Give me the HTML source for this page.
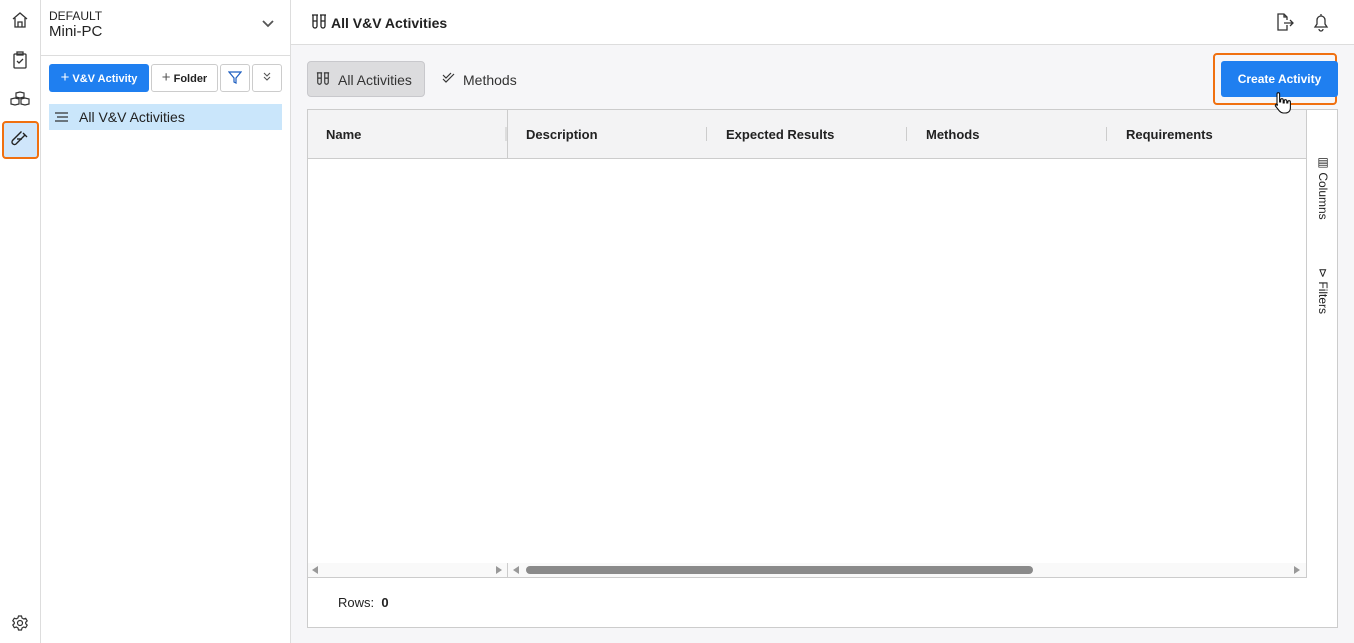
<!DOCTYPE html>
<html><head><meta charset="utf-8"><style>
*{box-sizing:border-box;margin:0;padding:0}
body{width:1354px;height:643px;overflow:hidden;font-family:"Liberation Sans",sans-serif;background:#f6f6f8;position:relative;color:#222}
.abs{position:absolute}
svg{display:block}
</style></head><body>
<div class="abs" style="left:0;top:0;width:41px;height:643px;background:#fff;border-right:1px solid #ddd"></div>
<svg class="abs" style="left:10px;top:10px" width="20" height="20" viewBox="0 0 20 20" fill="none" stroke="#333" stroke-width="1.3"><path d="M3 9L10 3l7 6M5 8v9h10V8M8 17v-5h4v5"/></svg>
<svg class="abs" style="left:11px;top:50px" width="18" height="20" viewBox="0 0 18 20" fill="none" stroke="#333" stroke-width="1.3"><rect x="3" y="4" width="12" height="14" rx="1"/><rect x="6" y="2" width="6" height="3"/><path d="M6 11l2 2 4-4"/></svg>
<svg class="abs" style="left:9px;top:90px" width="22" height="20" viewBox="0 0 22 20" fill="none" stroke="#333" stroke-width="1.2"><path d="M7 3l4-1 4 1v4l-4 1-4-1z M2 9l4-1 4 1v5l-4 1-4-1z M12 9l4-1 4 1v5l-4 1-4-1z"/></svg>
<div class="abs" style="left:2px;top:121px;width:37px;height:38px;border:2.5px solid #f07010;border-radius:4px;background:#cfe6fb"></div>
<svg class="abs" style="left:10px;top:130px" width="20" height="20" viewBox="0 0 20 20" fill="none" stroke="#222" stroke-width="1.4"><path d="M13 3l4 4M15 5L6 14a2.5 2.5 0 0 1-3.5-3.5L11.5 1.5" /><path d="M7 9h5"/></svg>
<svg class="abs" style="left:11px;top:614px" width="18" height="18" viewBox="0 0 18 18" fill="none" stroke="#333" stroke-width="1.2"><circle cx="9" cy="9" r="2.5"/><path d="M7.5 2h3l.5 2 1.7 1 2-.7 1.5 2.6-1.5 1.4v1.4l1.5 1.4-1.5 2.6-2-.7-1.7 1-.5 2h-3l-.5-2-1.7-1-2 .7L1.8 11l1.5-1.4V8.2L1.8 6.8l1.5-2.6 2 .7 1.7-1z"/></svg>
<div class="abs" style="left:41px;top:0;width:250px;height:643px;background:#fff;border-right:1px solid #ddd"></div>
<div class="abs" style="left:41px;top:55px;width:249px;height:1px;background:#ddd"></div>
<div class="abs" style="left:49px;top:9px;font-size:12px;color:#222">DEFAULT</div>
<div class="abs" style="left:49px;top:23px;font-size:15px;color:#222">Mini-PC</div>
<svg class="abs" style="left:261px;top:19px" width="14" height="10" viewBox="0 0 14 10" fill="none" stroke="#555" stroke-width="1.8"><path d="M2 2l5 5 5-5"/></svg>
<div class="abs" style="left:49px;top:64px;width:100px;height:28px;background:#1f7ff0;border-radius:3px;color:#fff;font-size:11px;font-weight:bold;line-height:28px;text-align:center"><span style="font-weight:normal;font-size:15px">+</span> V&amp;V Activity</div>
<div class="abs" style="left:151px;top:64px;width:67px;height:28px;border:1px solid #ccc;border-radius:3px;font-size:11px;font-weight:bold;line-height:26px;text-align:center"><span style="font-weight:normal;font-size:15px;color:#555">+</span> Folder</div>
<div class="abs" style="left:220px;top:64px;width:30px;height:28px;border:1px solid #ccc;border-radius:3px"></div>
<svg class="abs" style="left:228px;top:71px" width="14" height="13" viewBox="0 0 14 13" fill="none" stroke="#1f5fc0" stroke-width="1.2"><path d="M1 1h12L8 7v5L6 11V7z"/></svg>
<div class="abs" style="left:252px;top:64px;width:30px;height:28px;border:1px solid #ccc;border-radius:3px"></div>
<svg class="abs" style="left:262px;top:71px" width="10" height="12" viewBox="0 0 10 12" fill="none" stroke="#555" stroke-width="1.1"><path d="M2 2l3 3 3-3M2 6l3 3 3-3"/></svg>
<div class="abs" style="left:49px;top:104px;width:233px;height:26px;background:#cae6fb"></div>
<svg class="abs" style="left:54px;top:110px" width="16" height="14" viewBox="0 0 16 14" stroke="#333" stroke-width="1.2"><path d="M1 3h13M3 7h11M1 11h13"/></svg>
<div class="abs" style="left:79px;top:109px;font-size:14px;color:#222">All V&amp;V Activities</div>
<div class="abs" style="left:291px;top:0;width:1063px;height:45px;background:#fff;border-bottom:1px solid #ddd"></div>
<svg class="abs" style="left:311px;top:14px" width="16" height="16" viewBox="0 0 16 16" fill="none" stroke="#222" stroke-width="1.3"><path d="M2 1v11a2 2 0 0 0 4 0V1M10 1v11a2 2 0 0 0 4 0V1M1 1h6M9 1h6M2 7h4M10 7h4" /></svg>
<div class="abs" style="left:331px;top:15px;font-size:14px;font-weight:bold">All V&amp;V Activities</div>
<svg class="abs" style="left:1275px;top:12px" width="20" height="20" viewBox="0 0 20 20" fill="none" stroke="#333" stroke-width="1.3"><path d="M12 13v5H3V2h6l3 3v3M9 2v3h3M9 11h9M15 8l3 3-3 3"/></svg>
<svg class="abs" style="left:1312px;top:12px" width="18" height="20" viewBox="0 0 18 20" fill="none" stroke="#333" stroke-width="1.3"><path d="M3 15h12l-2-3V8a4 4 0 0 0-8 0v4zM7 17a2 2 0 0 0 4 0M9 2v2"/></svg>
<div class="abs" style="left:307px;top:61px;width:118px;height:36px;background:#dcdcde;border:1px solid #c8c8cc;border-radius:4px"></div>
<svg class="abs" style="left:316px;top:72px" width="14" height="14" viewBox="0 0 16 16" fill="none" stroke="#333" stroke-width="1.3"><path d="M2 1v11a2 2 0 0 0 4 0V1M10 1v11a2 2 0 0 0 4 0V1M1 1h6M9 1h6M2 7h4M10 7h4" /></svg>
<div class="abs" style="left:338px;top:72px;font-size:14px;color:#333">All Activities</div>
<svg class="abs" style="left:442px;top:72px" width="14" height="12" viewBox="0 0 14 12" fill="none" stroke="#333" stroke-width="1.2"><path d="M1 3l3 3 5-5M1 7l3 3 8-8"/></svg>
<div class="abs" style="left:463px;top:72px;font-size:14px;color:#333">Methods</div>
<div class="abs" style="left:1213px;top:53px;width:124px;height:52px;border:2.5px solid #f07010;border-radius:4px"></div>
<div class="abs" style="left:1221px;top:61px;width:117px;height:36px;background:#1f7ff0;border-radius:3px;color:#fff;font-size:12px;font-weight:bold;line-height:36px;text-align:center">Create Activity</div>
<div class="abs" style="left:307px;top:109px;width:1031px;height:519px;background:#fff;border:1px solid #ccc"></div>
<div class="abs" style="left:308px;top:110px;width:999px;height:49px;background:#f3f3f4;border-bottom:1px solid #ccc"></div>
<div class="abs" style="left:507px;top:110px;width:1px;height:49px;background:#ccc"></div>
<div class="abs" style="left:507px;top:563px;width:1px;height:15px;background:#ccc"></div>
<div class="abs" style="left:1306px;top:110px;width:1px;height:468px;background:#ccc"></div>
<div class="abs" style="left:505px;top:127px;width:2px;height:14px;background:#ddd"></div>
<div class="abs" style="left:706px;top:127px;width:1px;height:14px;background:#ccc"></div>
<div class="abs" style="left:906px;top:127px;width:1px;height:14px;background:#ccc"></div>
<div class="abs" style="left:1106px;top:127px;width:1px;height:14px;background:#ccc"></div>
<div class="abs" style="left:326px;top:127px;font-size:13px;font-weight:bold">Name</div>
<div class="abs" style="left:526px;top:127px;font-size:13px;font-weight:bold">Description</div>
<div class="abs" style="left:726px;top:127px;font-size:13px;font-weight:bold">Expected Results</div>
<div class="abs" style="left:926px;top:127px;font-size:13px;font-weight:bold">Methods</div>
<div class="abs" style="left:1126px;top:127px;font-size:13px;font-weight:bold">Requirements</div>
<div class="abs" style="left:1316px;top:155px;writing-mode:vertical-rl;font-size:12px;color:#222">▤ Columns</div>
<div class="abs" style="left:1316px;top:268px;writing-mode:vertical-rl;font-size:12px;color:#222">⊳ Filters</div>
<div class="abs" style="left:308px;top:563px;width:998px;height:15px;background:#f9f9f9;border-bottom:1px solid #ccc"></div>
<div class="abs" style="left:507px;top:563px;width:1px;height:15px;background:#ccc"></div>
<div class="abs" style="left:312px;top:566px;width:0;height:0;border-top:4px solid transparent;border-bottom:4px solid transparent;border-right:6px solid #999"></div>
<div class="abs" style="left:496px;top:566px;width:0;height:0;border-top:4px solid transparent;border-bottom:4px solid transparent;border-left:6px solid #999"></div>
<div class="abs" style="left:513px;top:566px;width:0;height:0;border-top:4px solid transparent;border-bottom:4px solid transparent;border-right:6px solid #999"></div>
<div class="abs" style="left:1294px;top:566px;width:0;height:0;border-top:4px solid transparent;border-bottom:4px solid transparent;border-left:6px solid #999"></div>
<div class="abs" style="left:526px;top:566px;width:507px;height:8px;background:#8a8a8a;border-radius:4px"></div>
<div class="abs" style="left:338px;top:595px;font-size:13px">Rows: &nbsp;<b>0</b></div>
<svg class="abs" style="left:1272px;top:92px" width="22" height="24" viewBox="0 0 22 24" fill="#fff" stroke="#111" stroke-width="1.1"><path d="M5 2a1.3 1.3 0 0 1 2.6 0v8h1V8a1.3 1.3 0 0 1 2.6 0v3h1V9a1.3 1.3 0 0 1 2.6 0v2h1v-1a1.3 1.3 0 0 1 2.6 0v6c0 3-2 5-5 5h-2c-2 0-3-1-4-2l-4-5a1.3 1.3 0 0 1 2-1.5L5 14z"/></svg>
</body></html>
